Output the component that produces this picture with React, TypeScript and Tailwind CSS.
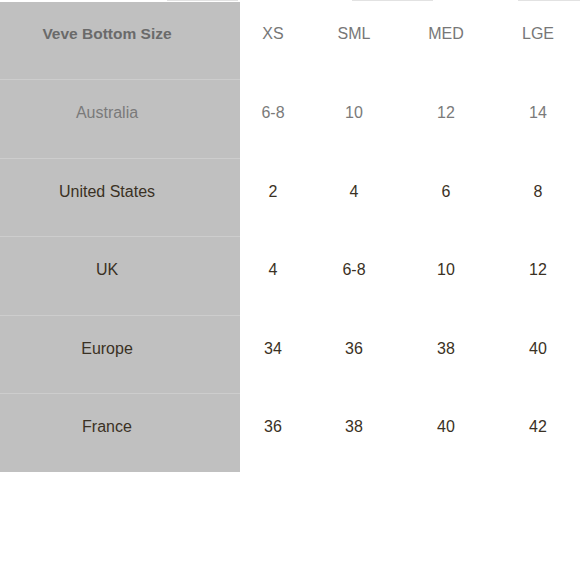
const sizes = ['XS', 'SML', 'MED', 'LGE']

const rows = [
  { name: 'Australia', vals: ['6-8', '10', '12', '14'], muted: true },
  { name: 'United States', vals: ['2', '4', '6', '8'] },
  { name: 'UK', vals: ['4', '6-8', '10', '12'] },
  { name: 'Europe', vals: ['34', '36', '38', '40'] },
  { name: 'France', vals: ['36', '38', '40', '42'] },
]

const cols = ['w-[66px]', 'w-[96px]', 'w-[88px]', 'w-[96px]']

export default function App() {
  return (
    <div
      className="w-[580px] h-[580px] bg-white overflow-hidden"
      style={{ fontFamily: '"Liberation Sans", Arial, sans-serif' }}
    >
      {/* faint top edge */}
      <div className="flex h-[2px]">
        <div className="w-[167px]" />
        <div className="w-[71px] h-px bg-[#e2e2e2]" />
        <div className="w-[114px]" />
        <div className="w-[81px] h-px bg-[#e2e2e2]" />
        <div className="w-[85px]" />
        <div className="flex-1 h-px bg-[#e2e2e2]" />
      </div>

      {/* Header */}
      <div className="flex h-[77px]">
        <div className="w-[240px] shrink-0 bg-[#c0c0c0] pr-[26px] pt-[22px] text-center text-[15.5px] leading-5 font-bold text-[#6a6a6a]">
          Veve Bottom Size
        </div>
        {sizes.map((s, i) => (
          <div key={s} className={`${cols[i]} shrink-0 pt-[22px] text-center text-[16px] leading-5 text-[#777777]`}>
            {s}
          </div>
        ))}
      </div>

      {/* Rows */}
      {rows.map(r => (
        <div key={r.name} className="flex h-[78.6px]">
          <div
            className={`w-[240px] shrink-0 bg-[#c0c0c0] border-t border-[#cdcdcd] pr-[26px] pt-[23px] text-center text-[16px] leading-5 ${
              r.muted ? 'text-[#7a7a7a]' : 'text-[#3a3124]'
            }`}
          >
            {r.name}
          </div>
          {r.vals.map((v, i) => (
            <div
              key={i}
              className={`${cols[i]} shrink-0 pt-[24px] text-center text-[16px] leading-5 ${
                r.muted ? 'text-[#7a7a7a]' : 'text-[#3a3124]'
              }`}
            >
              {v}
            </div>
          ))}
        </div>
      ))}
    </div>
  )
}
